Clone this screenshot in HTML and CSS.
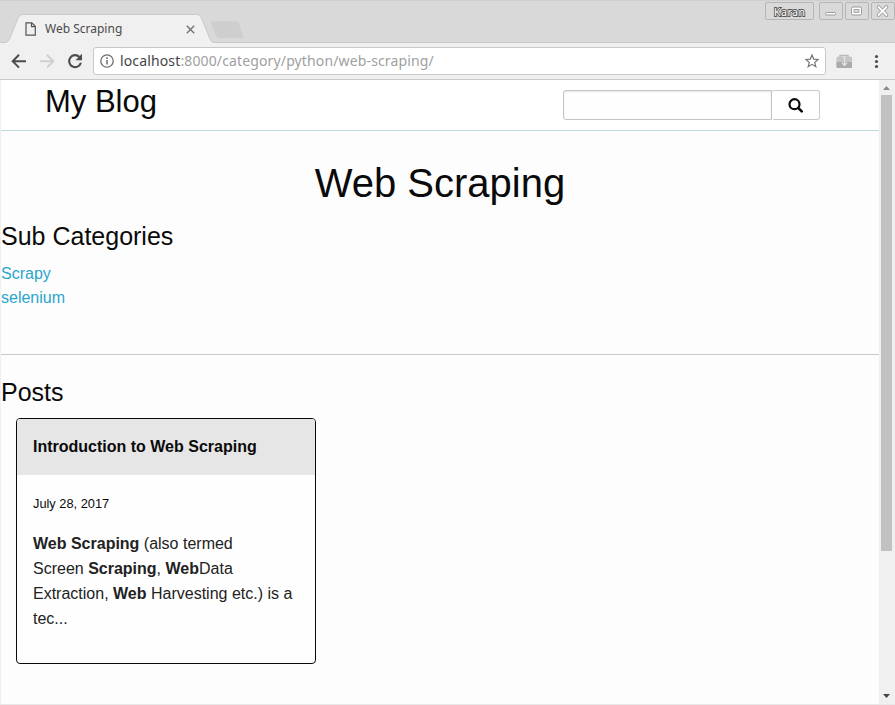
FILE: index.html
```html
<!DOCTYPE html>
<html lang="en">
<head>
<meta charset="utf-8">
<title>Web Scraping</title>
<link rel="stylesheet" href="styles.css">
</head>
<body>
<div class="window">
  <div class="titlebar">
    <svg class="tabs" width="260" height="43" viewBox="0 0 260 43">
      <path d="M212 21.500H236Q238 21.500 239 24L244 38H220Q217 38 216 35.500L211 23.500Q210.500 21.500 212 21.500Z" fill="#cecece"/>
      <path d="M0 43V42.500H5Q8 42.500 9.500 39L18 18Q19.500 14.500 22 14.500H197Q200 14.500 201.500 18L210 39Q211.500 42.500 214 42.500V43Z" fill="#f0f0f0"/>
      <path d="M0 42.500H5Q8 42.500 9.500 39L18 18Q19.500 14.500 22 14.500H197Q200 14.500 201.500 18L210 39Q211.500 42.500 214 42.500H260" fill="none" stroke="#c9c9c9"/>
    </svg>
    <div class="tab">
      <svg width="12" height="14" viewBox="0 0 12 14"><path d="M1 .8H6.800L10.300 4.300V13.200H1ZM6.500 1V4.700H10.200" fill="none" stroke="#555" stroke-width="1.200"/></svg>
      <span class="tab-title">Web Scraping</span>
      <svg width="9" height="9" viewBox="0 0 9 9"><path d="M.8.8L8.200 8.200M8.200.8L.8 8.200" stroke="#777" stroke-width="1.500"/></svg>
    </div>
    <div class="controls">
      <div class="control user"><svg width="46" height="16" viewBox="0 0 46 16"><text class="user-name" x="8" y="12.500" textLength="31">Karan</text></svg></div>
      <div class="control"><svg width="21" height="16" viewBox="0 0 21 16"><rect x="5.500" y="9.500" width="10" height="2.500" rx="1" fill="#fff" stroke="#999"/></svg></div>
      <div class="control"><svg width="21" height="16" viewBox="0 0 21 16"><rect x="5.500" y="4" width="10" height="8" rx="1.500" fill="#fff" stroke="#999"/><rect x="8" y="6.500" width="5" height="3" fill="#d9d9d9" stroke="#999" stroke-width=".8"/></svg></div>
      <div class="control"><svg width="21" height="16" viewBox="0 0 21 16"><path d="M6.500 4L14.500 12M14.500 4L6.500 12" stroke="#999" stroke-width="3.600" stroke-linecap="round"/><path d="M6.500 4L14.500 12M14.500 4L6.500 12" stroke="#fff" stroke-width="1.800" stroke-linecap="round"/></svg></div>
    </div>
  </div>
  <div class="toolbar">
    <svg class="nav" width="93" height="36" viewBox="0 0 93 36">
      <path d="M26 18.200H13M19 11.800L12.700 18.200L19 24.600" fill="none" stroke="#4d4d4d" stroke-width="2"/>
      <path d="M40 18.200H53M47 11.800L53.300 18.200L47 24.600" fill="none" stroke="#cfcfcf" stroke-width="2"/>
      <path d="M79.500 14A6 6 0 1 0 80.900 19.800" fill="none" stroke="#4d4d4d" stroke-width="2.100"/>
      <path d="M82 10.800V17.200H75.600Z" fill="#4d4d4d"/>
    </svg>
    <div class="address">
      <svg width="14" height="14" viewBox="0 0 14 14"><circle cx="7" cy="7" r="6.200" fill="none" stroke="#6e6e6e" stroke-width="1.300"/><path d="M7 6V10.500M7 3.300V4.900" stroke="#6e6e6e" stroke-width="1.500"/></svg>
      <span class="url">localhost<span class="path">:8000/category/python/web-scraping/</span></span>
      <svg width="14" height="14" viewBox="0 0 14 14"><path d="M7 1L8.700 5.100L13.100 5.450L9.750 8.350L10.800 12.700L7 10.350L3.200 12.700L4.250 8.350L.9 5.450L5.300 5.100Z" fill="none" stroke="#757575" stroke-width="1.200"/></svg>
    </div>
    <svg class="actions" width="69" height="36" viewBox="0 0 69 36">
      <path d="M14 14V12.500H22V14" fill="none" stroke="#bbb" stroke-width="1.500"/>
      <rect x="10.500" y="13.500" width="15.500" height="11.500" rx="1.500" fill="#c6c6c6"/>
      <path d="M10.500 19H26V23.500Q26 25 24.500 25H12Q10.500 25 10.500 23.500Z" fill="#ababab"/>
      <path d="M18.500 13V22M16 19.800L18.500 22.300L21 19.800" fill="none" stroke="#e4e4e4" stroke-width="1.300"/>
      <g fill="#4d4d4d"><circle cx="50.500" cy="13.500" r="1.600"/><circle cx="50.500" cy="18.500" r="1.600"/><circle cx="50.500" cy="23.500" r="1.600"/></g>
    </svg>
  </div>
  <div class="viewport">
    <div class="page">
      <header class="site-header">
        <div class="brand">My Blog</div>
        <form class="search">
          <input class="search-input" type="text" aria-label="Search">
          <button class="search-button" type="button" aria-label="Search"><svg width="16" height="16" viewBox="0 0 16 16"><circle cx="6.500" cy="7.200" r="5" fill="none" stroke="#0a0a0a" stroke-width="2.200"/><path d="M10.200 10.900L13.700 14.400" stroke="#0a0a0a" stroke-width="2.600" stroke-linecap="round"/></svg></button>
        </form>
      </header>
      <h1>Web Scraping</h1>
      <section class="categories">
        <h2>Sub Categories</h2>
        <a href="#">Scrapy</a>
        <a href="#">selenium</a>
      </section>
      <section class="posts">
        <h2>Posts</h2>
        <article class="card">
          <h3>Introduction to Web Scraping</h3>
          <div class="card-body">
            <p class="date">July 28, 2017</p>
            <p class="excerpt"><b>Web Scraping</b> (also termed Screen&nbsp;<b>Scraping</b>, <b>Web</b>Data Extraction, <b>Web</b> Harvesting etc.) is a tec...</p>
          </div>
        </article>
      </section>
    </div>
    <div class="scrollbar">
      <svg width="15" height="15" viewBox="0 0 15 15"><path d="M4 10L7.500 6L11 10Z" fill="#8a8a8a"/></svg>
      <div class="thumb"></div>
      <svg width="15" height="15" viewBox="0 0 15 15"><path d="M4 5L7.500 9L11 5Z" fill="#444"/></svg>
    </div>
  </div>
</div>
</body>
</html>
```
FILE: styles.css
```css
* { box-sizing: border-box; }
body { margin: 0; font-family: "Liberation Sans", Arial, sans-serif; color: #0a0a0a; }
svg { display: block; flex: none; }
h1, h2, h3, p { margin: 0; font-weight: normal; }

.window { display: flex; flex-direction: column; width: 895px; height: 705px; overflow: hidden; background: #f0f0f0; }

.titlebar { position: relative; display: flex; justify-content: space-between; height: 43px; background: #d9d9d9; border-top: 1px solid #cfcfcf; box-shadow: inset 0 -1px #c9c9c9; }
.tabs { position: absolute; left: 0; top: -1px; }
.tab { position: relative; display: flex; align-items: center; width: 195px; height: 28px; margin-top: 14px; padding-left: 25px; }
.tab-title { flex: 1; margin-left: 8px; padding-bottom: 2px; font: 12px "Noto Sans", sans-serif; color: #4a4a4a; }
.controls { display: flex; gap: 2px; padding-top: 1px; }
.control { width: 24px; height: 18px; border: 1px solid #b5b5b5; border-radius: 2px; background: #d9d9d9; }
.user { width: 49px; margin-right: 3px; }
.user-name { font: 10.500px "Noto Sans", sans-serif; fill: #fff; stroke: #555; stroke-width: 1.800px; paint-order: stroke; }

.toolbar { display: flex; height: 37px; border-bottom: 1px solid #c9c9c9; background: #f0f0f0; }
.address { display: flex; align-items: center; width: 733px; height: 28px; margin-top: 4px; padding: 0 6px; border: 1px solid #c8c8c8; border-radius: 3px; background: #fff; }
.url { flex: 1; margin-left: 6px; padding-bottom: 2px; font: 14px "Noto Sans", sans-serif; letter-spacing: .135px; color: #444; }
.path { color: #a0a0a0; }

.viewport { display: flex; height: 625px; padding-left: 1px; border-bottom: 1px solid #e8e8e8; }
.page { width: 878px; background: #fdfdfd; }
.scrollbar { display: flex; flex-direction: column; justify-content: space-between; width: 15px; background: #f0f0f0; }
.thumb { width: 11px; height: 456px; margin: 0 2px auto; background: #c1c1c1; }

.site-header { display: flex; justify-content: space-between; height: 51px; padding: 0 59px 0 44px; border-bottom: 1px solid #bfd9df; background: #fff; }
.brand { font-size: 31px; line-height: 43px; }
.search { display: flex; margin-top: 10px; }
.search-input { width: 209px; height: 30px; border: 1px solid #c4c4c4; border-radius: 3px 0 0 3px; background: #fefefe; box-shadow: inset 0 1px 2px rgba(10, 10, 10, .1); }
.search-button { display: flex; align-items: center; justify-content: center; width: 48px; height: 30px; padding: 0; border: 1px solid #cacaca; border-left: 0; border-radius: 3px; background: #fff; }

h1 { margin-top: 24px; font-size: 40px; line-height: 56px; text-align: center; }
h2 { font-size: 25px; line-height: 35px; }
.categories { height: 136px; margin-top: 8px; border-bottom: 1px solid #cacaca; }
.categories h2 { margin-bottom: 8px; }
.categories a { display: block; font-size: 16px; line-height: 24px; color: #2ba6cb; text-decoration: none; }
.posts { padding-top: 20px; }
.card { width: 300px; height: 246px; margin: 8px 0 0 15px; overflow: hidden; border: 1px solid #0a0a0a; border-radius: 4px; background: #fefefe; }
.card h3 { height: 56px; padding-left: 16px; background: #e6e6e6; font-size: 16px; font-weight: bold; line-height: 56px; }
.card-body { padding: 16px; }
.date { font-size: 12.800px; line-height: 25px; }
.excerpt { margin-top: 15px; font-size: 16px; line-height: 25px; color: #222; }
```
